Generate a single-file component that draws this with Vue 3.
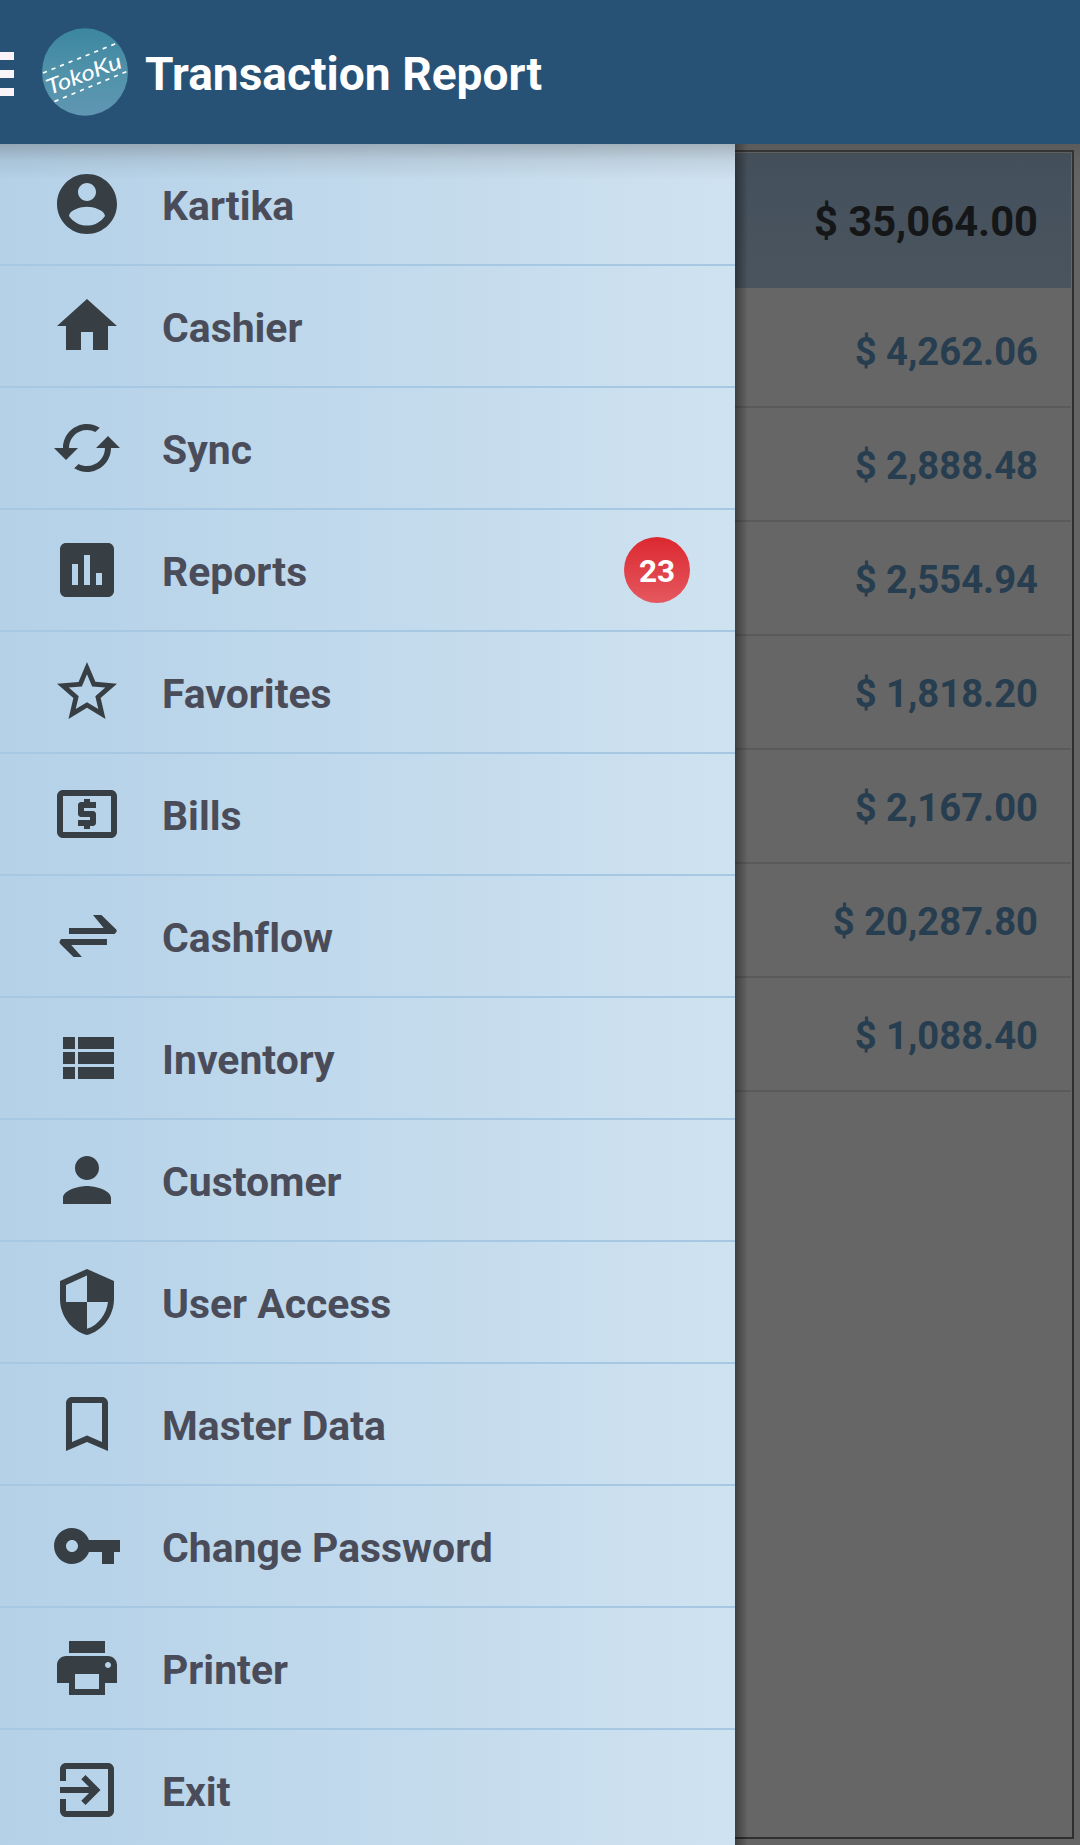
<script setup>
const items = [
  { label: 'Kartika', icon: 'M12 2C6.48 2 2 6.48 2 12s4.48 10 10 10 10-4.48 10-10S17.52 2 12 2zm0 3c1.66 0 3 1.34 3 3s-1.34 3-3 3-3-1.34-3-3 1.34-3 3-3zm0 14.2c-2.5 0-4.71-1.28-6-3.22.03-1.99 4-3.08 6-3.08 1.99 0 5.97 1.09 6 3.08-1.29 1.94-3.5 3.22-6 3.22z' },
  { label: 'Cashier', icon: 'M10 20v-6h4v6h5v-8h3L12 3 2 12h3v8z' },
  { label: 'Sync', icon: 'M19 8l-4 4h3c0 3.31-2.69 6-6 6-1.01 0-1.97-.25-2.8-.7l-1.46 1.46C8.97 19.54 10.43 20 12 20c4.42 0 8-3.58 8-8h3l-4-4zM6 12c0-3.31 2.69-6 6-6 1.01 0 1.97.25 2.8.7l1.46-1.46C15.03 4.46 13.57 4 12 4c-4.42 0-8 3.58-8 8H1l4 4 4-4H6z' },
  { label: 'Reports', badge: 23, icon: 'M19 3H5c-1.1 0-2 .9-2 2v14c0 1.1.9 2 2 2h14c1.1 0 2-.9 2-2V5c0-1.1-.9-2-2-2zM9 17H7v-7h2v7zm4 0h-2V7h2v10zm4 0h-2v-4h2v4z' },
  { label: 'Favorites', icon: 'M22 9.24l-7.19-.62L12 2 9.19 8.63 2 9.24l5.46 4.73L5.82 21 12 17.27 18.18 21l-1.63-7.03L22 9.24zM12 15.4l-3.76 2.27 1-4.28-3.32-2.88 4.38-.38L12 6.1l1.71 4.04 4.38.38-3.32 2.88 1 4.28L12 15.4z' },
  { label: 'Bills', icon: 'M11 17h2v-1h1c.55 0 1-.45 1-1v-3c0-.55-.45-1-1-1h-3v-1h4V8h-2V7h-2v1h-1c-.55 0-1 .45-1 1v3c0 .55.45 1 1 1h3v1H9v2h2v1zm9-13H4c-1.11 0-1.99.89-1.99 2L2 18c0 1.11.89 2 2 2h16c1.11 0 2-.89 2-2V6c0-1.11-.89-2-2-2zm0 14H4V6h16v12z' },
  { label: 'Cashflow', icon: 'M6 9.35H17.55L14 5H16.8L21.75 9.85Q22.1 10.2 21.8 10.7L21.2 11.3H6zM18.65 13V15H6.75L10.3 19H7.5L3 14.6Q2.6 14 3 13.5L3.4 13z' },
  { label: 'Inventory', icon: 'M4 14h4v-4H4v4zm0 5h4v-4H4v4zM4 9h4V5H4v4zm5 5h12v-4H9v4zm0 5h12v-4H9v4zM9 5v4h12V5H9z' },
  { label: 'Customer', icon: 'M12 12c2.21 0 4-1.79 4-4s-1.79-4-4-4-4 1.79-4 4 1.79 4 4 4zm0 2c-2.67 0-8 1.34-8 4v2h16v-2c0-2.66-5.33-4-8-4z' },
  { label: 'User Access', icon: 'M12 1L3 5v6c0 5.55 3.84 10.74 9 12 5.16-1.26 9-6.45 9-12V5l-9-4zm0 10.99h7c-.53 4.12-3.28 7.79-7 8.94V12H5V6.3l7-3.11v8.8z' },
  { label: 'Master Data', icon: 'M17 3H7c-1.1 0-1.99.9-1.99 2L5 21l7-3 7 3V5c0-1.1-.9-2-2-2zm0 15l-5-2.18L7 18V5h10v13z' },
  { label: 'Change Password', icon: 'M12.65 10C11.83 7.67 9.61 6 7 6c-3.31 0-6 2.69-6 6s2.69 6 6 6c2.61 0 4.83-1.67 5.65-4H17v4h4v-4h2v-4H12.65zM7 14c-1.1 0-2-.9-2-2s.9-2 2-2 2 .9 2 2-.9 2-2 2z' },
  { label: 'Printer', icon: 'M19 8H5c-1.66 0-3 1.34-3 3v6h4v4h12v-4h4v-6c0-1.66-1.34-3-3-3zm-3 11H8v-5h8v5zm3-7c-.55 0-1-.45-1-1s.45-1 1-1 1 .45 1 1-.45 1-1 1zm-1-9H6v4h12V3z' },
  { label: 'Exit', icon: 'M10.09 15.59L11.5 17l5-5-5-5-1.41 1.41L12.67 11H3v2h9.67l-2.58 2.59zM19 3H5c-1.11 0-2 .9-2 2v4h2V5h14v14H5v-4H3v4c0 1.1.89 2 2 2h14c1.1 0 2-.9 2-2V5c0-1.1-.9-2-2-2z' },
]
const total = '$ 35,064.00'
const amounts = ['$ 4,262.06', '$ 2,888.48', '$ 2,554.94', '$ 1,818.20', '$ 2,167.00', '$ 20,287.80', '$ 1,088.40']
</script>

<template>
  <div class="screen">
    <header class="bar">
      <div class="burger"><i></i><i></i><i></i></div>
      <svg class="logo" viewBox="0 0 86 88">
        <defs>
          <linearGradient id="lg" x1="0" y1="0" x2="0" y2="1">
            <stop offset="0" stop-color="#3c869f" />
            <stop offset="0.5" stop-color="#5092aa" />
            <stop offset="1" stop-color="#6096b2" />
          </linearGradient>
        </defs>
        <ellipse cx="43" cy="44" rx="43" ry="43.7" fill="url(#lg)" />
        <g stroke="#fff" stroke-width="1.7" stroke-dasharray="4.2 5">
          <path d="M1 45L74 15.5" />
          <path d="M12.500 73.500L86 43" />
        </g>
        <text class="logo-text" transform="translate(7.500 67) rotate(-20.500)" textLength="79" lengthAdjust="spacingAndGlyphs">TokoKu</text>
      </svg>
      <h1>Transaction Report</h1>
    </header>
    <main class="body">
      <nav class="drawer">
        <a v-for="item in items" :key="item.label" class="item">
          <svg class="icon" viewBox="0 0 24 24"><path :d="item.icon" fill-rule="evenodd" /></svg>
          <span class="label">{{ item.label }}</span>
          <span v-if="item.badge" class="badge">{{ item.badge }}</span>
        </a>
      </nav>
      <section class="report">
        <div class="frame">
          <div class="total">{{ total }}</div>
          <div v-for="a in amounts" :key="a" class="amount">{{ a }}</div>
        </div>
        <div class="drawer-shadow"></div>
      </section>
      <div class="bar-shadow"></div>
    </main>
  </div>
</template>

<style>
body { margin: 0; }
</style>

<style scoped>
.screen {
  width: 1080px;
  height: 1845px;
  overflow: hidden;
  display: flex;
  flex-direction: column;
  font-family: Roboto, "Liberation Sans", sans-serif;
  font-weight: 700;
}
.bar {
  height: 144px;
  flex: none;
  display: flex;
  align-items: center;
  background: #275275;
}
.burger {
  width: 14px;
  display: flex;
  flex-direction: column;
  gap: 10px;
  margin-top: 4px;
}
.burger i { height: 8px; background: #f8f4f8; }
.logo { width: 86px; height: 88px; margin-left: 28px; flex: none; }
.logo-text {
  font-family: Lato, sans-serif;
  font-style: italic;
  font-weight: 400;
  font-size: 21.5px;
  fill: #fff;
}
h1 {
  margin: 4px 0 0 17px;
  font-size: 46.1px;
  line-height: 54px;
  color: #fff;
  white-space: nowrap;
}
.body { flex: 1; min-height: 0; display: flex; position: relative; }
.drawer {
  width: 735px;
  flex: none;
  overflow: hidden;
  background: linear-gradient(90deg, #b4d1e8, #cfe2f0);
}
.item {
  height: 120px;
  border-bottom: 2px solid #a6c8e3;
  display: flex;
  align-items: center;
  padding: 0 45px 0 51px;
}
.icon { width: 72px; height: 72px; fill: #373f45; flex: none; }
.label {
  margin-left: 39px;
  padding-top: 4px;
  font-size: 40.9px;
  line-height: 50px;
  font-variant-ligatures: none;
  color: #4a4d59;
  flex: 1;
  white-space: nowrap;
}
.badge {
  width: 66px;
  height: 66px;
  border-radius: 50%;
  background: linear-gradient(#dc2830, #e5585f);
  color: #fff;
  font-size: 31.5px;
  line-height: 69px;
  text-align: center;
}
.report {
  flex: 1;
  display: flex;
  position: relative;
  padding: 6px 6px 6px 0;
  background: #646465;
}
.frame {
  flex: 1;
  border: 2px solid #2f2f30;
  border-left: 0;
  padding: 1px 1px 0 0;
  background: #666;
}
.total,
.amount {
  box-sizing: border-box;
  text-align: right;
  padding-right: 33px;
  white-space: nowrap;
}
.total {
  height: 135px;
  font-size: 41.7px;
  line-height: 137px;
  color: #151618;
  background: linear-gradient(#43505c, #4a545e);
}
.amount {
  height: 114px;
  border-bottom: 2px solid #5a5a5a;
  font-size: 38.2px;
  line-height: 116px;
  color: #273d50;
}
.total + .amount { height: 120px; padding-top: 6px; }
.drawer-shadow {
  position: absolute;
  inset: 0 auto 0 0;
  width: 13px;
  background: linear-gradient(90deg, rgba(0, 0, 0, 0.38), rgba(0, 0, 0, 0.2) 50%, rgba(0, 0, 0, 0));
}
.bar-shadow {
  position: absolute;
  inset: 0 0 auto 0;
  height: 36px;
  background: linear-gradient(rgba(70, 70, 70, 0.3), rgba(70, 70, 70, 0.1) 45%, rgba(70, 70, 70, 0));
}
</style>
